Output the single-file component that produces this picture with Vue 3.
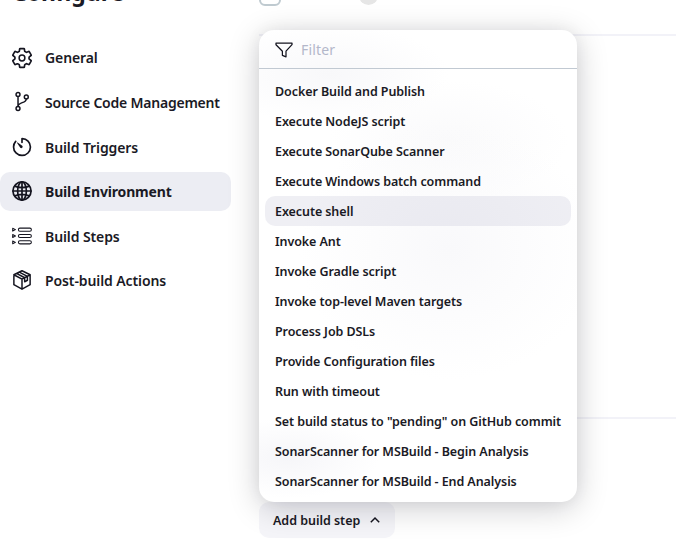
<script setup>
import { ref } from 'vue'

const sections = [
  { label: 'General', icon: 'gear' },
  { label: 'Source Code Management', icon: 'branch' },
  { label: 'Build Triggers', icon: 'timer' },
  { label: 'Build Environment', icon: 'globe' },
  { label: 'Build Steps', icon: 'list' },
  { label: 'Post-build Actions', icon: 'package' },
]
const current = ref('Build Environment')

const steps = [
  'Docker Build and Publish',
  'Execute NodeJS script',
  'Execute SonarQube Scanner',
  'Execute Windows batch command',
  'Execute shell',
  'Invoke Ant',
  'Invoke Gradle script',
  'Invoke top-level Maven targets',
  'Process Job DSLs',
  'Provide Configuration files',
  'Run with timeout',
  'Set build status to "pending" on GitHub commit',
  'SonarScanner for MSBuild - Begin Analysis',
  'SonarScanner for MSBuild - End Analysis',
]
const highlighted = ref('Execute shell')
</script>

<template>
  <div class="page">
    <aside class="side">
      <h1>Configure</h1>
      <nav>
        <a
          v-for="s in sections"
          :key="s.label"
          class="task"
          :class="[s.icon, { active: s.label === current }]"
          @click="current = s.label"
        >
          <svg viewBox="0 0 512 512" class="icon">
            <g v-if="s.icon === 'gear'" class="line">
              <circle cx="256" cy="256" r="74" />
              <path transform="translate(-33 -33) scale(1.13)" d="M416.39 256a154.34 154.34 0 01-1.53 20.79l45.21 35.46a10.81 10.81 0 012.45 13.75l-42.77 74a10.81 10.81 0 01-13.14 4.59l-44.9-18.08a16.11 16.11 0 00-15.17 1.75A164.48 164.48 0 01325 400.8a15.94 15.94 0 00-8.82 12.14l-6.73 47.89a11.08 11.08 0 01-10.68 9.17h-85.54a11.11 11.11 0 01-10.69-8.87l-6.72-47.82a16.07 16.07 0 00-9-12.22 155.3 155.3 0 01-21.46-12.57 16 16 0 00-15.11-1.71l-44.89 18.07a10.81 10.81 0 01-13.14-4.58l-42.77-74a10.8 10.8 0 012.45-13.75l38.21-30a16.05 16.05 0 006-14.08c-.36-4.17-.58-8.33-.58-12.5s.21-8.27.58-12.35a16 16 0 00-6.07-13.94l-38.19-30A10.81 10.81 0 0149.48 186l42.77-74a10.81 10.81 0 0113.14-4.59l44.9 18.08a16.11 16.11 0 0015.17-1.75A164.48 164.48 0 01187 111.2a15.94 15.94 0 008.82-12.14l6.73-47.89A11.08 11.08 0 01213.23 42h85.54a11.11 11.11 0 0110.69 8.87l6.72 47.82a16.07 16.07 0 009 12.22 155.3 155.3 0 0121.46 12.57 16 16 0 0015.11 1.71l44.89-18.07a10.81 10.81 0 0113.14 4.58l42.77 74a10.8 10.8 0 01-2.45 13.75l-38.21 30a16.05 16.05 0 00-6.05 14.08c.33 4.14.55 8.3.55 12.47z" />
            </g>
            <g v-else-if="s.icon === 'branch'" class="line">
              <circle cx="154" cy="62" r="50" />
              <circle cx="154" cy="424" r="50" />
              <circle cx="366" cy="126" r="50" />
              <path d="M154 112v262M366 176c0 122-212 70-212 198" />
            </g>
            <g v-else-if="s.icon === 'timer'" class="line">
              <path d="M112.91 128A191.85 191.85 0 0064 254c-1.18 106.35 85.65 193.8 192 194 106.2.2 192-85.83 192-192 0-104.54-83.55-189.61-187.5-192a4.36 4.36 0 00-4.5 4.37V152" transform="translate(-32 -32) scale(1.125)" />
              <path class="needle" d="M212 274l-82-118a10 10 0 0114-14l118 82a35 35 0 11-50 50z" />
            </g>
            <g v-else-if="s.icon === 'globe'" class="line bold">
              <circle cx="256" cy="256" r="232" />
              <ellipse cx="256" cy="256" rx="112" ry="232" />
              <path d="M256 28v456M28 256h456M72 132c110 48 258 48 368 0M72 380c110-48 258-48 368 0" />
            </g>
            <g v-else-if="s.icon === 'list'" class="line thin">
              <rect x="164" y="54" width="332" height="78" rx="39" />
              <rect x="164" y="217" width="332" height="78" rx="39" />
              <rect x="164" y="380" width="332" height="78" rx="39" />
              <path d="M18 56l70 37-70 37zM18 219l70 37-70 37zM18 382l70 37-70 37z" />
            </g>
            <g v-else class="line package">
              <path d="M256 20L464 122v254L256 492 48 376V122zM48 122l208 114 208-114M256 236v256M116 88l208 110M186 54l208 110M324 198v104l70-40V164" />
            </g>
          </svg>
          <span>{{ s.label }}</span>
        </a>
      </nav>
    </aside>

    <main class="content">
      <div class="option"><i class="checkbox"></i><i class="help"></i></div>
      <hr class="rule first" />
      <hr class="rule second" />
      <button class="add">
        <span>Add build step</span>
        <svg viewBox="0 0 12 12"><path d="M1.8 8.2L6 4l4.2 4.2" /></svg>
      </button>

      <div class="dropdown">
        <label class="filter">
          <svg viewBox="0 0 18 16"><path d="M1 1h16v1.7L11 9.2v5.6l-3.6-1.4V9.2L1 2.7z" /></svg>
          <input placeholder="Filter" />
        </label>
        <ul>
          <li
            v-for="step in steps"
            :key="step"
            :class="{ on: step === highlighted }"
            @mouseenter="highlighted = step"
          >{{ step }}</li>
        </ul>
      </div>
    </main>
  </div>
</template>

<style>
body {
  margin: 0;
  overflow: hidden;
  background: #fff;
}
</style>

<style scoped>
.page {
  display: flex;
  width: 676px;
  height: 552px;
  overflow: hidden;
  font-family: "Noto Sans", "Open Sans", sans-serif;
  color: #1a1a25;
}
.side {
  width: 231px;
  margin-right: 28px;
  flex: none;
}
h1 {
  margin: -25px 0 29px 12px;
  height: 34px;
  font-size: 23px;
  line-height: 34px;
  font-weight: 700;
  letter-spacing: -0.1px;
}
nav {
  display: flex;
  flex-direction: column;
  gap: 5.6px;
}
.task {
  display: flex;
  align-items: center;
  gap: 13px;
  height: 39px;
  padding-left: 12px;
  border-radius: 10px;
  font-size: 14px;
  font-weight: 600;
  letter-spacing: -0.1px;
  white-space: nowrap;
}
.task.branch {
  letter-spacing: -0.22px;
}
.task.active {
  background: #ecedf3;
  font-weight: 700;
  letter-spacing: -0.16px;
}
.task.timer,
.task.list {
  box-sizing: border-box;
  padding-top: 1px;
}
.icon {
  width: 20px;
  height: 20px;
  flex: none;
  overflow: visible;
}
.line {
  fill: none;
  stroke: #14141f;
  stroke-width: 38;
  stroke-linecap: round;
  stroke-linejoin: round;
}
.line.bold {
  stroke-width: 44;
}
.line.thin {
  stroke-width: 27;
}
.line.package {
  stroke-width: 38;
}
.line .needle {
  fill: #14141f;
  stroke: none;
}
.content {
  position: relative;
  flex: 1;
  display: flex;
  flex-direction: column;
}
.option {
  display: flex;
  gap: 78px;
  margin-top: -16px;
  height: 50px;
}
.checkbox {
  box-sizing: border-box;
  width: 22px;
  height: 22px;
  border: 2px solid #bfcad0;
  border-radius: 6px;
}
.help {
  width: 19px;
  height: 19px;
  margin-top: 2px;
  border-radius: 50%;
  background: #e6e6e6;
}
.rule {
  width: 100%;
  height: 2px;
  margin: 0;
  border: 0;
  background: #f2f2f8;
}
.second {
  margin-top: 381px;
}
.add {
  display: flex;
  align-items: center;
  justify-content: space-between;
  width: 136px;
  height: 36px;
  margin-top: 83px;
  padding: 0 14px;
  border: 0;
  border-radius: 10px;
  background: #f5f5f9;
  color: inherit;
  font: 600 12.5px "Noto Sans", sans-serif;
  letter-spacing: -0.03px;
}
.add svg {
  width: 12px;
  height: 12px;
}
.add path {
  fill: none;
  stroke: #14141f;
  stroke-width: 1.5;
}
.dropdown {
  position: absolute;
  left: 0;
  top: 30px;
  box-sizing: border-box;
  width: 318px;
  height: 472px;
  border-radius: 15px;
  overflow: hidden;
  background:
    radial-gradient(ellipse 120px 50px at 70px 44px, #f8f8fa, transparent),
    radial-gradient(ellipse 150px 130px at 190px 220px, #f9f9fb, transparent),
    radial-gradient(ellipse 120px 60px at 190px 110px, #fafafb, transparent),
    radial-gradient(ellipse 90px 40px at 30px 428px, #f6f6f9, transparent),
    #fff;
  box-shadow: 0 6px 32px rgba(0, 0, 20, 0.2), 0 0 16px rgba(0, 0, 20, 0.05);
}
.filter {
  display: flex;
  align-items: center;
  gap: 8px;
  height: 38px;
  padding-left: 16px;
  border-bottom: 1px solid #c1c9d2;
}
.filter svg {
  width: 18px;
  height: 16px;
  margin-top: 2px;
}
.filter path {
  fill: none;
  stroke: #14141f;
  stroke-width: 1.25;
  stroke-linejoin: round;
}
.filter input {
  width: 220px;
  padding: 0;
  border: 0;
  outline: 0;
  background: none;
  font: 400 14px "Noto Sans", sans-serif;
  letter-spacing: 0.15px;
}
.filter input::placeholder {
  color: #b3b7ca;
  opacity: 1;
}
ul {
  margin: 0;
  padding: 7px 6px 6px;
  list-style: none;
}
li {
  box-sizing: border-box;
  height: 30px;
  padding: 1px 0 0 10px;
  border-radius: 10px;
  font-size: 12.5px;
  font-weight: 600;
  letter-spacing: -0.08px;
  line-height: 30px;
  white-space: nowrap;
}
li.on {
  background: rgba(100, 95, 150, 0.1);
}
</style>
